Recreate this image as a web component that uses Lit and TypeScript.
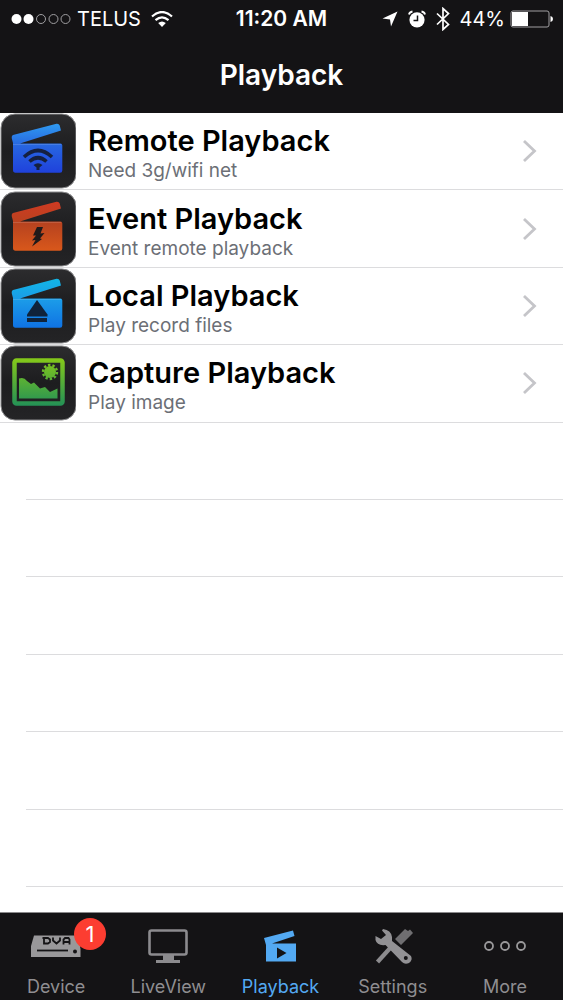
import { LitElement, html, svg, css } from "lit";
import { customElement, property } from "lit/decorators.js";
import { classMap } from "lit/directives/class-map.js";

const clapper = (id: string, top: string, mid: string, bottom: string) => svg`
  <defs>
    <linearGradient id=${id} gradientUnits="userSpaceOnUse" x1="0" y1="11" x2="0" y2="60">
      <stop offset="0" stop-color=${top}/>
      <stop offset=".45" stop-color=${mid}/>
      <stop offset="1" stop-color=${bottom}/>
    </linearGradient>
  </defs>
  <path d="M13 22 56.500 10.800Q59 10.500 59.700 12.500L61 17.500 20 30.500H60.500Q62.300 30.500 62.300 32.500V57.500Q62.300 59.700 60 59.700H15.500Q13 59.700 13 57V30L11.700 25Q11.500 22.500 13 22Z" fill="url(#${id})"/>
  <path d="M13 31.500H61" stroke="#fff" stroke-opacity=".14"/>`;

const rowIcons: Record<string, unknown> = {
  remote: svg`${clapper("g-remote", "#2f9af0", "#2765e0", "#1f41dc")}
    <g fill="none" stroke="#15203f" stroke-width="3.600">
      <path d="M24 44Q38 31 52 44"/><path d="M29.500 48.500Q38 41 46.500 48.500"/>
    </g>
    <path d="M33.500 52Q38 48.500 42.500 52L39.500 54.500V57H36.500V54.500Z" fill="#15203f"/>`,
  event: svg`${clapper("g-event", "#cf3a22", "#b8431f", "#d9581b")}
    <path d="M37 36H43L40.500 42.500 44.500 42 40 47.500 42 48 32 55.500 35.500 49 32 49.500 36 44.500 33 44.500Z" fill="#1f1a1a"/>`,
  local: svg`${clapper("g-local", "#12b6e6", "#1b9ae8", "#0f72e4")}
    <path d="M37 32 47.500 46.500V48.500H27V46.500Z" fill="#10233a"/><rect x="27" y="50" width="20" height="4" fill="#10233a"/>`,
  capture: svg`
    <defs><linearGradient id="g-capture" gradientUnits="userSpaceOnUse" x1="0" y1="14" x2="0" y2="60">
      <stop offset="0" stop-color="#84c81a"/><stop offset="1" stop-color="#259255"/>
    </linearGradient></defs>
    <rect x="14.500" y="15.500" width="48" height="43" rx="2" fill="none" stroke="url(#g-capture)" stroke-width="4.500"/>
    <path d="M19 33.500Q24 31.500 27 36L31 39 34 37.500 40 43.500 45 42 50 47 57.500 43.500V53.500H19Z" fill="url(#g-capture)"/>
    <circle cx="50" cy="27" r="6" fill="url(#g-capture)"/>
    <circle cx="50" cy="27" r="7" fill="none" stroke="url(#g-capture)" stroke-width="2.400" stroke-dasharray="2.400 2"/>`,
};

const tabIcons: Record<string, unknown> = {
  device: svg`<path d="M6 11.500H50L52.500 25V33H3V22Z" fill="#99989a"/>
    <path d="M9 26.500H40" stroke="#141315" stroke-width="1.800"/><circle cx="47" cy="27.500" r="2" fill="#141315"/>
    <path d="M16 14V19.500H20L22 18V15.500L20 14H14.500M25 13.500V16.500L28.500 19.500 32 16.500V13.500M35.500 20.500V15.500L37 14H40.500L41.500 15.500V20.500M35.500 18H41.500" fill="none" stroke="#141315" stroke-width="1.800"/>`,
  live: svg`<rect x="9.500" y="6.500" width="37" height="24" rx="2" fill="none" stroke="#8c8b8e" stroke-width="2.600"/>
    <path d="M23 31H34V36H40V39H16V36H23Z" fill="#8c8b8e"/>`,
  playback: svg`<path fill-rule="evenodd" d="M12 14 41 6.500 42.500 12 20 19.500H44V37.500H14V21ZM25 23.500V34.500L34.500 29Z" fill="#53a9f2"/>`,
  settings: svg`<path d="M30 15 40 5 43 7 45 5.500 48 9 36 21Z" fill="#6f6e71"/><path d="M27 22 12.500 38" stroke="#8c8b8e" stroke-width="4.200"/>
    <path d="M18 5Q26 6 27 13L27 17 46 32Q48 36 44 39 40 41 37 38L20.500 21Q12 22 10.500 16V12L16 15 21 11 17 6.500Z" fill="#929194"/>
    <circle cx="40.800" cy="34" r="2" fill="#141315"/>`,
  more: svg`<g fill="none" stroke="#99989a" stroke-width="1.800"><circle cx="12" cy="22" r="4"/><circle cx="28" cy="22" r="4"/><circle cx="44" cy="22" r="4"/></g>`,
};

@customElement("status-bar")
class StatusBar extends LitElement {
  static styles = css`
    :host { display: grid; grid-template-columns: 1fr auto 1fr; align-items: center; height: 38px; padding: 0 10px; color: #fff; font-size: 20px; line-height: 24px; }
    .side { display: flex; align-items: center; white-space: nowrap; }
    .carrier { gap: 6px; }
    .wifi { margin-left: 4px; }
    .time { font-size: 21px; font-weight: 600; }
    .right { justify-content: flex-end; gap: 10px; }
    .level { display: flex; align-items: center; gap: 5px; }
    svg { display: block; flex: none; }
  `;
  render() {
    return html`
      <div class="side carrier">
        <svg width="61" height="12" viewBox="-1 0 61 12" role="img" aria-label="Signal 2 of 5">
          <g fill="#fff"><circle cx="5.500" cy="6" r="5"/><circle cx="17.500" cy="6" r="5"/></g>
          <g fill="none" stroke="#a09fa2"><circle cx="30" cy="6" r="4.500"/><circle cx="42.500" cy="6" r="4.500"/><circle cx="54.500" cy="6" r="4.500"/></g>
        </svg>
        <span>TELUS</span>
        <svg class="wifi" width="22" height="17" viewBox="0 0 22 17" role="img" aria-label="Wi-Fi">
          <g fill="none" stroke="#fff" stroke-width="2.200"><path d="M1 5.500Q11-3.500 21 5.500"/><path d="M4.500 9.200Q11 3.500 17.500 9.200"/></g>
          <path d="M7.200 12Q11 8.800 14.800 12L11 16Z" fill="#fff"/>
        </svg>
      </div>
      <span class="time">11:20 AM</span>
      <div class="side right">
        <svg width="16" height="16" viewBox="0 0 16 16"><path d="M15.500.5 9 15.500 8 8.500.5 7.500Z" fill="#fff"/></svg>
        <svg width="18" height="18" viewBox="0 0 18 18">
          <circle cx="9" cy="9.800" r="7.600" fill="#fff"/><path d="M9.500 5.500V10.500H5.500" fill="none" stroke="#141315" stroke-width="1.500"/>
          <path d="M1 4.500Q1.500 2 4.500 1.500M17 4.500Q16.500 2 13.500 1.500" fill="none" stroke="#fff" stroke-width="1.800"/>
        </svg>
        <svg width="14" height="24" viewBox="0 0 14 24"><path d="M1 6.500 12.500 17.500 7 22.500V1.500L12.500 6.500 1 17.500" fill="none" stroke="#fff" stroke-width="1.700"/></svg>
        <span class="level">44%
          <svg width="43" height="18" viewBox="0 0 43 18" role="img" aria-label="Battery">
            <rect x="1" y="1" width="38" height="16" rx="2" fill="none" stroke="#a09fa2"/><path d="M2 2H18V16H2ZM40.500 6Q43 6.500 43 9T40.500 12Z" fill="#fff"/>
          </svg>
        </span>
      </div>`;
  }
}

@customElement("playback-row")
class PlaybackRow extends LitElement {
  @property() icon = "";
  @property() name = "";
  @property() detail = "";
  static styles = css`
    :host { display: block; height: 100%; }
    .link { display: flex; align-items: center; height: 100%; padding-right: 26px; color: #000; text-decoration: none; }
    .icon { display: block; flex: none; margin-right: 12px; }
    .text { flex: 1; display: flex; flex-direction: column; min-width: 0; padding-top: 6px; }
    .name { font-size: 29px; line-height: 34px; font-weight: 600; }
    .detail { font-size: 19px; line-height: 26px; color: #6c6f76; }
  `;
  render() {
    return html`
      <a class="link" href="#${this.icon}">
        <svg class="icon" width="76" height="76" viewBox="0 0 76 76" aria-hidden="true">
          <defs><linearGradient id="tile" x1="0" y1="0" x2="0" y2="1"><stop offset="0" stop-color="#2c2c2e"/><stop offset=".5" stop-color="#1d1d1f"/><stop offset="1" stop-color="#242426"/></linearGradient></defs>
          <rect x="1" y="1" width="75" height="74" rx="14" fill="url(#tile)" stroke="#8b8b8d"/>
          ${rowIcons[this.icon]}
        </svg>
        <span class="text"><span class="name">${this.name}</span><span class="detail">${this.detail}</span></span>
        <svg width="15" height="24" viewBox="0 0 15 24" aria-hidden="true"><path d="M2 2 12.500 12 2 22" fill="none" stroke="#c5c5c9" stroke-width="2.800"/></svg>
      </a>`;
  }
}

@customElement("tab-item")
class TabItem extends LitElement {
  @property() icon = "";
  @property() label = "";
  @property() badge = "";
  @property({ type: Boolean }) active = false;
  static styles = css`
    :host { display: block; }
    .tab { display: flex; flex-direction: column; align-items: center; width: 100%; padding: 11px 0 0; border: 0; background: none; font: inherit; font-size: 18px; line-height: 22px; color: #8f8e91; cursor: pointer; }
    .tab.active { color: #53a9f2; }
    .art { position: relative; margin-bottom: 8px; }
    .art svg { display: block; }
    .badge { position: absolute; top: -6px; right: -22px; min-width: 32px; border-radius: 16px; background: #fc3d31; color: #fff; font-size: 22px; line-height: 32px; text-align: center; }
  `;
  render() {
    return html`
      <button class=${classMap({ tab: true, active: this.active })} aria-current=${this.active ? "page" : "false"}>
        <span class="art">
          <svg width="56" height="44" viewBox="0 0 56 44" aria-hidden="true">${tabIcons[this.icon]}</svg>
          ${this.badge ? html`<span class="badge">${this.badge}</span>` : ""}
        </span>
        <span>${this.label}</span>
      </button>`;
  }
}

@customElement("app-root")
class AppRoot extends LitElement {
  static styles = css`
    :host { display: flex; flex-direction: column; min-height: 100vh; background: #fff; font-family: Inter, "Liberation Sans", sans-serif; }
    .header { background: #141315; color: #fff; }
    .title { margin: 0; padding: 20px 0 21px; text-align: center; font-size: 28px; line-height: 34px; font-weight: 600; }
    .main { flex: 1; display: flex; }
    .list { flex: 1; display: flex; flex-direction: column; margin: 0; padding: 0; list-style: none; }
    .item { flex: 1 0 76px; box-sizing: border-box; border-bottom: 1px solid #dcdcde; }
    .blank { margin-left: 26px; }
    .rest { flex: 0 0 25px; }
    .tabs { display: grid; grid-template-columns: repeat(5, 1fr); height: 87px; padding-right: 2px; border-top: 1px solid #8a898b; background: #141315; }
  `;
  private rows = [
    ["remote", "Remote Playback", "Need 3g/wifi net"],
    ["event", "Event Playback", "Event remote playback"],
    ["local", "Local Playback", "Play record files"],
    ["capture", "Capture Playback", "Play image"],
  ];
  render() {
    return html`
      <header class="header">
        <status-bar></status-bar>
        <h1 class="title">Playback</h1>
      </header>
      <main class="main">
        <ul class="list">
          ${this.rows.map(([icon, name, detail]) => html`<li class="item"><playback-row icon=${icon} name=${name} detail=${detail}></playback-row></li>`)}
          ${Array.from({ length: 6 }, () => html`<li class="item blank" aria-hidden="true"></li>`)}
          <li class="rest" aria-hidden="true"></li>
        </ul>
      </main>
      <nav class="tabs" aria-label="Sections">
        <tab-item icon="device" label="Device" badge="1"></tab-item>
        <tab-item icon="live" label="LiveView"></tab-item>
        <tab-item icon="playback" label="Playback" active></tab-item>
        <tab-item icon="settings" label="Settings"></tab-item>
        <tab-item icon="more" label="More"></tab-item>
      </nav>`;
  }
}
